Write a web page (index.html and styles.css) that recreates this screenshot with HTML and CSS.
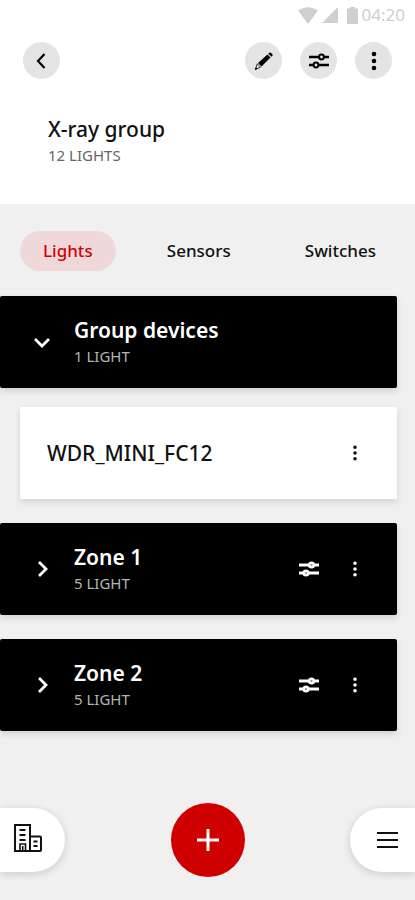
FILE: index.html
```html
<!DOCTYPE html>
<html lang="en">
<head>
<meta charset="utf-8">
<meta name="viewport" content="width=device-width, initial-scale=1">
<title>X-ray group</title>
<link rel="stylesheet" href="styles.css">
</head>
<body>
<svg class="sprite" aria-hidden="true">
  <symbol id="sliders" viewBox="0 0 20 16">
    <path d="M0 4h10M15 4h5M0 12h5M10 12h10" fill="none" stroke="currentColor" stroke-width="2.4"/>
    <circle cx="12.500" cy="4" r="2.400" fill="none" stroke="currentColor" stroke-width="2"/>
    <circle cx="7" cy="12" r="2.400" fill="none" stroke="currentColor" stroke-width="2"/>
  </symbol>
  <symbol id="sliders-bold" viewBox="0 0 20 16">
    <path d="M0 4h20M0 12h20" fill="none" stroke="currentColor" stroke-width="3"/>
    <circle cx="12.500" cy="4" r="3.600" fill="currentColor"/>
    <circle cx="7" cy="12" r="3.600" fill="currentColor"/>
    <circle class="knob" cx="12.500" cy="4" r="1"/>
    <circle class="knob" cx="7" cy="12" r="1"/>
  </symbol>
  <symbol id="dots" viewBox="0 0 6 20">
    <circle cx="3" cy="3" r="2.300" fill="currentColor"/>
    <circle cx="3" cy="10" r="2.300" fill="currentColor"/>
    <circle cx="3" cy="17" r="2.300" fill="currentColor"/>
  </symbol>
  <symbol id="dots-small" viewBox="0 0 4 16">
    <path d="M2 .4a1.800 1.800 0 0 1 0 3.600a1.800 1.800 0 0 1 0-3.600zM2 6.200a1.800 1.800 0 0 1 0 3.600a1.800 1.800 0 0 1 0-3.600zM2 12a1.800 1.800 0 0 1 0 3.600a1.800 1.800 0 0 1 0-3.600z" fill="currentColor"/>
  </symbol>
  <symbol id="chevron" viewBox="0 0 20 20">
    <path d="M7 3l7 7-7 7" fill="none" stroke="currentColor" stroke-width="2.800"/>
  </symbol>
</svg>
<div class="app">
  <header class="header">
    <div class="status">
      <svg width="20" height="17" viewBox="0 0 20 17" aria-hidden="true"><path d="M0 3.500Q10-3 20 3.500L10 17z" fill="currentColor"/></svg>
      <svg width="16" height="16" viewBox="0 0 16 16" aria-hidden="true"><path d="M16 0v16H0z" fill="currentColor"/></svg>
      <svg class="battery" width="11" height="17" viewBox="0 0 11 17" aria-hidden="true"><path d="M3 0h5v1.500h3V17H0V1.500h3z" fill="currentColor"/></svg>
      <span>04:20</span>
    </div>
    <div class="toolbar">
      <button class="round" aria-label="Back"><svg width="18" height="18" viewBox="0 0 18 18"><path d="M11.500 2L5 9l6.500 7" fill="none" stroke="currentColor" stroke-width="2.200"/></svg></button>
      <div class="tools">
        <button class="round" aria-label="Edit"><svg width="20" height="20" viewBox="0 0 20 20"><path d="M4 12L13.500 3.500l3 3L7.500 15.500z" fill="currentColor"/><path d="M14.300 2.700l1-1q.8-.6 1.600 0l1.500 1.500q.6.800 0 1.500l-1 1z" fill="currentColor"/><path d="M3.300 12.800L6.600 16.100 1.300 18.500z" fill="none" stroke="currentColor" stroke-width=".8"/><path d="M1 18.800l.9-2.800 1.900 1.900z" fill="currentColor"/></svg></button>
        <button class="round" aria-label="Settings"><svg width="20" height="16"><use href="#sliders"/></svg></button>
        <button class="round" aria-label="More"><svg width="6" height="20"><use href="#dots"/></svg></button>
      </div>
    </div>
    <div class="heading">
      <h1>X-ray group</h1>
      <p>12 LIGHTS</p>
    </div>
  </header>
  <nav class="tabs">
    <a class="tab active" href="#lights">Lights</a>
    <a class="tab" href="#sensors">Sensors</a>
    <a class="tab" href="#switches">Switches</a>
  </nav>
  <main class="list">
    <section class="card zone">
      <button class="toggle" aria-label="Collapse Group devices"><svg class="open" width="20" height="20"><use href="#chevron"/></svg></button>
      <div class="info"><h2>Group devices</h2><p>1 LIGHT</p></div>
    </section>
    <section class="card device">
      <h3>WDR_MINI_FC12</h3>
      <button class="action" aria-label="More"><svg width="4" height="16"><use href="#dots-small"/></svg></button>
    </section>
    <section class="card zone">
      <button class="toggle" aria-label="Expand Zone 1"><svg width="20" height="20"><use href="#chevron"/></svg></button>
      <div class="info"><h2>Zone 1</h2><p>5 LIGHT</p></div>
      <button class="action" aria-label="Settings"><svg width="20" height="16"><use href="#sliders-bold"/></svg></button>
      <button class="action" aria-label="More"><svg width="4" height="16"><use href="#dots-small"/></svg></button>
    </section>
    <section class="card zone">
      <button class="toggle" aria-label="Expand Zone 2"><svg width="20" height="20"><use href="#chevron"/></svg></button>
      <div class="info"><h2>Zone 2</h2><p>5 LIGHT</p></div>
      <button class="action" aria-label="Settings"><svg width="20" height="16"><use href="#sliders-bold"/></svg></button>
      <button class="action" aria-label="More"><svg width="4" height="16"><use href="#dots-small"/></svg></button>
    </section>
  </main>
  <footer class="dock">
    <button class="side left" aria-label="Buildings"><svg width="28" height="28" viewBox="0 0 28 28" fill="none" stroke="currentColor"><path d="M1 1h15v26H1z" stroke-width="2"/><path d="M16 12.500h10q1 0 1 1V26q0 1-1 1H16" stroke-width="2"/><path d="M6 27v-7h5.500v7M8.700 22v5" stroke-width="1.600"/><path d="M5.500 6h6M5.500 11h6M5.500 16h6M19.500 17.500h4M19.500 22h4" stroke-width="1.800"/></svg></button>
    <button class="add" aria-label="Add"><svg width="22" height="22" viewBox="0 0 22 22"><path d="M11 0v22M0 11h22" stroke="currentColor" stroke-width="3"/></svg></button>
    <button class="side right" aria-label="Menu"><svg width="21" height="18" viewBox="0 0 21 18"><path d="M0 2h21M0 9h21M0 16h21" stroke="currentColor" stroke-width="2"/></svg></button>
  </footer>
</div>
</body>
</html>
```
FILE: styles.css
```css
* {
  box-sizing: border-box;
}

body {
  margin: 0;
  background: #f0f0f0;
  color: #111;
  font-family: "Noto Sans", sans-serif;
}

h1, h2, h3, p {
  margin: 0;
}

button {
  display: flex;
  align-items: center;
  justify-content: center;
  flex: none;
  padding: 0;
  border: 0;
  background: none;
  color: inherit;
  cursor: pointer;
}

svg {
  display: block;
  flex: none;
}

.sprite {
  position: absolute;
  width: 0;
  height: 0;
}

.knob {
  fill: #888;
}

.app {
  display: flex;
  flex-direction: column;
  min-height: 100vh;
}

.header {
  padding: 4px 0 36px;
  background: #fff;
}

.status {
  display: flex;
  align-items: center;
  justify-content: flex-end;
  gap: 4px;
  height: 22px;
  padding-right: 10px;
  color: #cfcfcf;
  font-size: 17px;
  line-height: 22px;
}

.battery {
  margin-left: 5px;
}

.toolbar {
  display: flex;
  justify-content: space-between;
  padding: 16px 23px 0;
}

.tools {
  display: flex;
  gap: 18px;
}

.round {
  width: 37px;
  height: 37px;
  border-radius: 50%;
  background: #e4e4e4;
  color: #000;
}

.heading {
  padding: 36px 48px 0;
}

h1, h2, h3 {
  font-size: 21px;
  line-height: 28px;
}

h1, h3 {
  font-weight: 500;
}

h2 {
  font-weight: 600;
}

.heading p, .info p {
  font-size: 15px;
  line-height: 25px;
}

.heading p {
  color: #666;
}

.tabs {
  display: flex;
  justify-content: space-between;
  padding: 27px 16px 25px 20px;
}

.tab {
  padding: 0 23px;
  border-radius: 20px;
  color: #111;
  font-size: 17px;
  font-weight: 500;
  line-height: 40px;
  text-decoration: none;
}

.active {
  background: #eed8da;
  color: #d40000;
}

.list {
  display: flex;
  flex-direction: column;
  gap: 24px;
  padding-right: 18px;
}

.card {
  display: flex;
  align-items: center;
  min-height: 92px;
  box-shadow: 0 3px 6px rgba(60, 80, 100, 0.18);
}

.zone {
  padding: 0 28px;
  border-radius: 2px;
  background: #000;
  color: #fff;
}

.device {
  margin: -5px 0 0 20px;
  padding: 0 28px 0 27px;
  background: #fff;
}

.info {
  flex: 1;
  margin-left: 18px;
}

.info p {
  color: #b4b4b4;
}

.device h3 {
  flex: 1;
}

.toggle {
  width: 28px;
  height: 28px;
}

.open {
  transform: rotate(90deg);
}

.action {
  width: 28px;
  height: 28px;
}

.action + .action {
  margin-left: 18px;
}

.dock {
  display: grid;
  grid-template-columns: 1fr auto 1fr;
  align-items: center;
  margin-top: auto;
  padding: 24px 0 23px;
}

.side {
  width: 65px;
  height: 64px;
  background: #fff;
  color: #111;
  box-shadow: 0 2px 8px rgba(0, 0, 0, 0.16);
}

.left {
  padding: 0 9px 4px 0;
  border-radius: 0 32px 32px 0;
}

.right {
  justify-self: end;
  padding-left: 9px;
  border-radius: 32px 0 0 32px;
}

.add {
  width: 74px;
  height: 74px;
  border-radius: 50%;
  background: #d10000;
  color: #fff;
}
```
